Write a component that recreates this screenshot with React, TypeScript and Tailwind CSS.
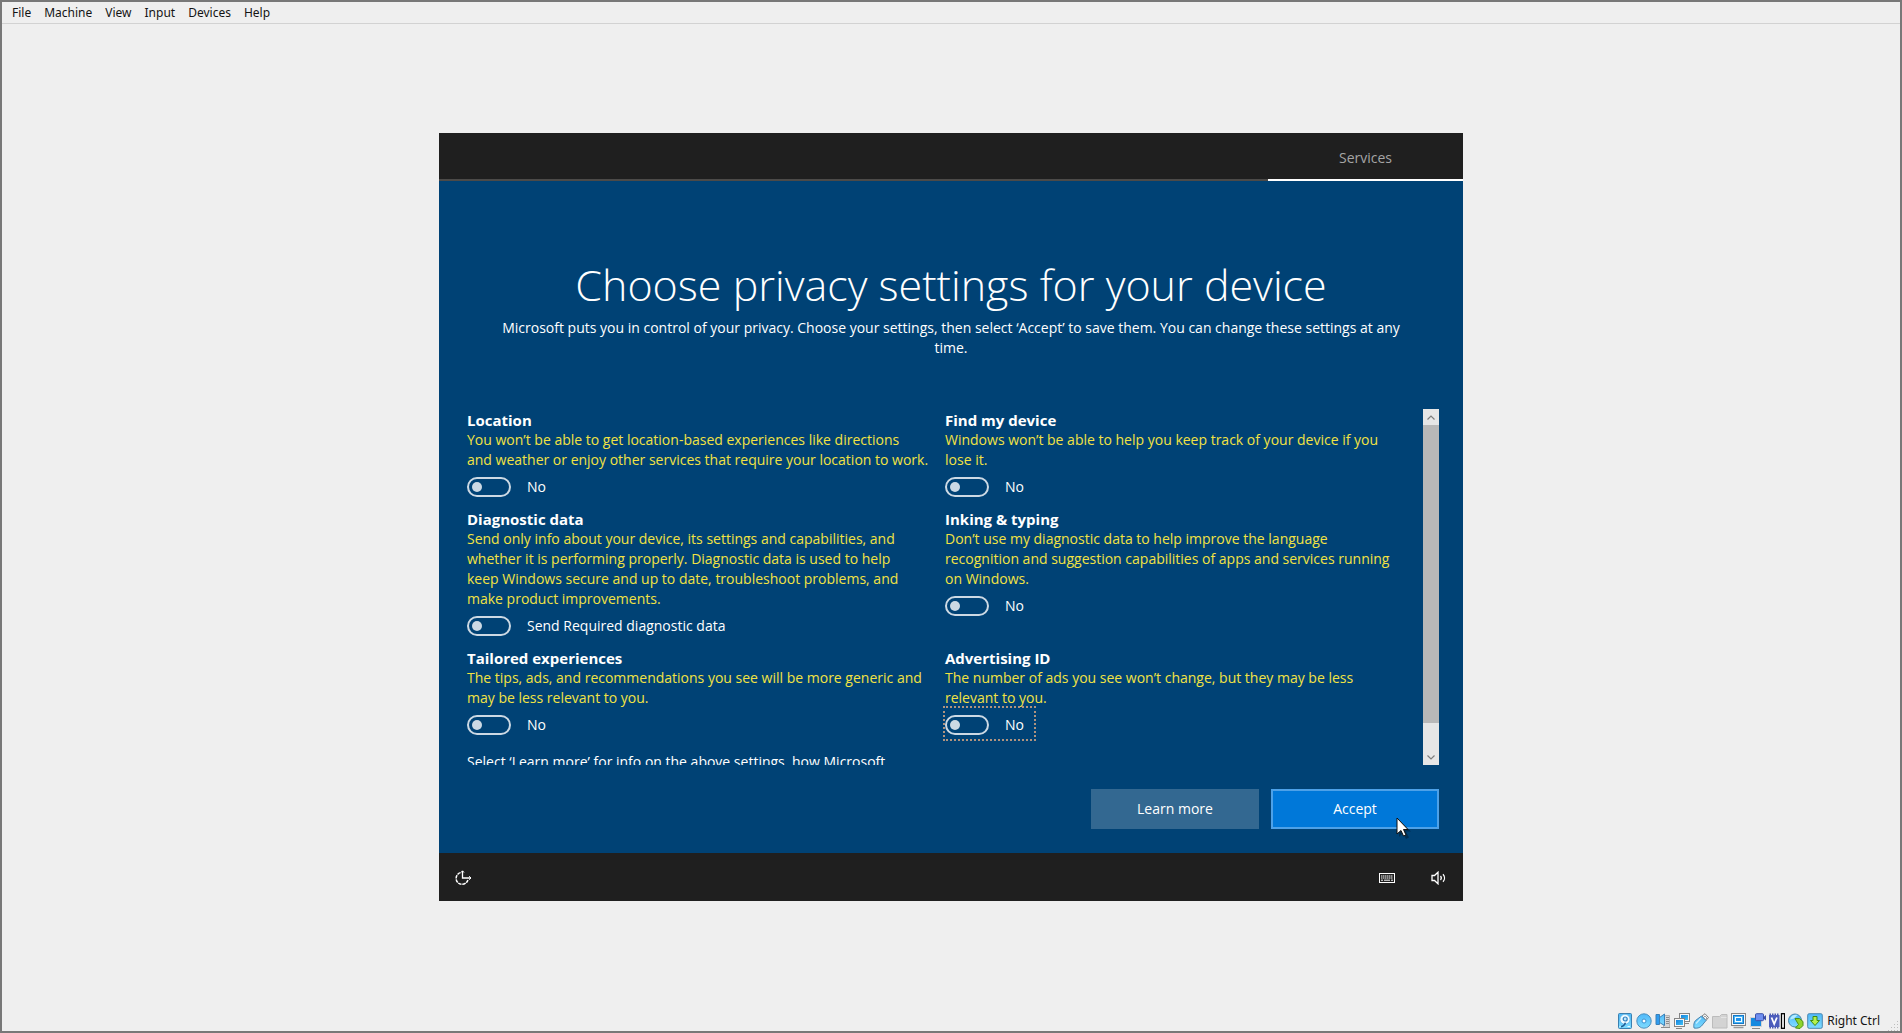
import type { ReactNode } from "react";

const MENUS = ["File", "Machine", "View", "Input", "Devices", "Help"];

type Setting = { id: string; title: string; text: string; state: string; focused?: boolean };

const SETTINGS: Setting[] = [
  {
    id: "location",
    title: "Location",
    text: "You won’t be able to get location-based experiences like directions\nand weather or enjoy other services that require your location to work.",
    state: "No",
  },
  {
    id: "find",
    title: "Find my device",
    text: "Windows won’t be able to help you keep track of your device if you\nlose it.",
    state: "No",
  },
  {
    id: "diagnostic",
    title: "Diagnostic data",
    text: "Send only info about your device, its settings and capabilities, and\nwhether it is performing properly. Diagnostic data is used to help\nkeep Windows secure and up to date, troubleshoot problems, and\nmake product improvements.",
    state: "Send Required diagnostic data",
  },
  {
    id: "inking",
    title: "Inking & typing",
    text: "Don’t use my diagnostic data to help improve the language\nrecognition and suggestion capabilities of apps and services running\non Windows.",
    state: "No",
  },
  {
    id: "tailored",
    title: "Tailored experiences",
    text: "The tips, ads, and recommendations you see will be more generic and\nmay be less relevant to you.",
    state: "No",
  },
  {
    id: "advertising",
    title: "Advertising ID",
    text: "The number of ads you see won’t change, but they may be less\nrelevant to you.",
    state: "No",
    focused: true,
  },
];

function SettingItem({ setting }: { setting: Setting }) {
  return (
    <section className="pb-2">
      <h2 className="text-[15px] leading-5 font-bold">{setting.title}</h2>
      <p id={`${setting.id}-text`} className="whitespace-pre-line text-[#f2e243]">
        {setting.text}
      </p>
      <label
        className={
          setting.focused
            ? "flex w-fit items-center gap-4 pt-[7px] pr-2.5 pb-1 outline-2 outline-dotted outline-[#b0937f]"
            : "flex w-fit items-center gap-4 pt-[7px] pr-2.5 pb-1"
        }
      >
        <input
          type="checkbox"
          role="switch"
          aria-describedby={`${setting.id}-text`}
          className="h-5 w-11 shrink-0 appearance-none rounded-full border-2 border-[#ccd9e4] before:m-[3px] before:block before:size-2.5 before:rounded-full before:bg-[#ccd9e4] checked:before:ml-[27px]"
        />
        <span>{setting.state}</span>
      </label>
    </section>
  );
}

function Chevron({ up }: { up?: boolean }) {
  return (
    <svg width="8" height="5" viewBox="0 0 8 5" fill="none" stroke="#7d7d7d" strokeWidth="1.2">
      <path d={up ? "M.5 4.5 4 1l3.5 3.5" : "M.5 .5 4 4 7.5 .5"} />
    </svg>
  );
}

function ScrollBar() {
  return (
    <div className="flex w-4 shrink-0 flex-col bg-[#e6e6e6]">
      <button aria-label="Scroll up" className="flex h-4 items-center justify-center">
        <Chevron up />
      </button>
      <div className="flex-1">
        <div className="h-[92%] bg-[#b8b8b8]" />
      </div>
      <button aria-label="Scroll down" className="flex h-4 items-center justify-center">
        <Chevron />
      </button>
    </div>
  );
}

function Icon16({ label, children }: { label: string; children: ReactNode }) {
  return (
    <button aria-label={label}>
      <svg width="16" height="16" viewBox="0 0 16 16" fill="none">
        {children}
      </svg>
    </button>
  );
}

function StatusIcons() {
  return (
    <div className="flex items-center gap-[3px]">
      <svg width="0" height="0" className="absolute">
        <defs>
          <linearGradient id="sky" x1="0" y1="0" x2="0" y2="1">
            <stop offset="0" stopColor="#4fb8f8" />
            <stop offset="1" stopColor="#7fdcff" />
          </linearGradient>
          <linearGradient id="deep" x1="0" y1="0" x2="1" y2="1">
            <stop offset="0" stopColor="#1583dc" />
            <stop offset="1" stopColor="#3fc0f8" />
          </linearGradient>
        </defs>
      </svg>
      <Icon16 label="Hard disks">
        <rect x="1.5" y=".5" width="13" height="15" rx="1" fill="url(#sky)" stroke="#3a80b0" />
        <circle cx="8" cy="6.3" r="5" fill="#eefaff" stroke="#4aa8e0" strokeWidth=".6" />
        <circle cx="8.2" cy="6" r="2" fill="#bfe6fa" stroke="#2f80c0" strokeWidth="1.2" />
        <path d="M4 13.8c1.5-.3 3.500-1.500 4.500-4" stroke="#1f5f96" strokeWidth="1.5" />
        <path d="M2.500 13.500h1M10.500 13.500h2.500" stroke="#eafaff" />
      </Icon16>
      <Icon16 label="Optical drives">
        <circle cx="8" cy="8" r="7.2" fill="url(#sky)" stroke="#4a90c0" />
        <circle cx="8" cy="8" r="2" fill="#fff" stroke="#3a90d0" />
      </Icon16>
      <Icon16 label="Audio">
        <path d="M8.500 2.500h6v12h-6z" fill="#d6d6d6" stroke="#b4b4b4" />
        <path d="M11 4.500h3M11 6.500h3M11 8.500h3M11 10.500h3M6 14.500h9" stroke="#8c8c8c" />
        <path d="M1 1.500h3.500v10H1z" fill="#2f9cf0" stroke="#3a80b8" />
        <path d="M4.500 4.500 9.500 1v11.500l-5-3z" fill="url(#sky)" stroke="#3a80b8" />
      </Icon16>
      <Icon16 label="Network">
        <rect x="5.500" y=".5" width="10" height="8" fill="#f8f8f8" stroke="#858585" />
        <rect x="7" y="2" width="7" height="5" fill="url(#deep)" />
        <path d="M11 10.500h4M2 15.500h6" stroke="#858585" />
        <rect x=".5" y="5.500" width="10" height="8" fill="#f8f8f8" stroke="#858585" />
        <rect x="2" y="7" width="7" height="5" fill="url(#deep)" />
      </Icon16>
      <Icon16 label="USB">
        <path d="M9 3 12 .7 15.5 4.5 13 7.5z" fill="#f2f2f2" stroke="#808080" />
        <path d="M11.500 3.500h1M13 5h1" stroke="#505050" />
        <path d="M2.500 7.500 8.500 3l4.500 4.500-4.500 5.500c-2 2-4.500 2.500-7.500 2C.5 12 .8 9.500 2.500 7.500z" fill="url(#sky)" stroke="#4a86b0" />
        <path d="M3 10.500 8 5" stroke="#c4eeff" strokeWidth="1.5" />
      </Icon16>
      <Icon16 label="Shared folders">
        <path d="M.5 3.500h7l2-2h5.500v13.500H.5z" fill="#d3d3d3" stroke="#bcbcbc" />
        <path d="M9 4.500h5.500" stroke="#e4e4e4" />
      </Icon16>
      <Icon16 label="Display">
        <rect x=".5" y=".5" width="14" height="12" fill="#f6f6f6" stroke="#858585" />
        <rect x="2.500" y="2.500" width="10" height="8" fill="#48b4f4" stroke="#1478c8" />
        <rect x="4.500" y="4.500" width="6" height="4" fill="#1f92ec" stroke="#f4fcff" />
        <path d="M2.500 14.500h10" stroke="#9a9a9a" strokeWidth="1.5" />
      </Icon16>
      <Icon16 label="Recording">
        <path d="M.5 4.500h11v9H.5z" fill="#168ae0" stroke="#d4d4d4" />
        <path d="M2 15.500h8" stroke="#8b8b8b" />
        <rect x="5.500" y=".7" width="8" height="7" rx="1" fill="#6f8ff0" stroke="#3c50a8" />
        <path d="m13.500 4 2.500-2v5.500l-2.500-2z" fill="#3c50a8" />
      </Icon16>
      <Icon16 label="Processor">
        <path d="M.5 1.500h10M.5 14.500h10" stroke="#4c5ab0" strokeWidth="2" strokeDasharray="1.5 1" />
        <rect x="0" y="2" width="10.500" height="12" fill="#4c5cbc" />
        <path d="m2.500 4.500 2.700 6.500L7.900 4.500" stroke="#fff" strokeWidth="1.8" />
        <rect x="12.500" y=".7" width="3" height="14.600" fill="#fff" stroke="#000" strokeWidth="1.3" />
      </Icon16>
      <Icon16 label="Mouse integration">
        <circle cx="7" cy="7.500" r="6.500" fill="url(#sky)" stroke="#4a86a8" />
        <path d="M2 6.500C3 2.500 6.500 1 9.500 2L6 5.500z" fill="#b4ecff" />
        <path d="M7 5.500h4.500l3.500 3v4l-3 3-4.500-.5 3-3.500z" fill="#8fd42c" stroke="#4a8f14" />
      </Icon16>
      <Icon16 label="Keyboard">
        <rect x=".7" y=".7" width="14.600" height="14.600" rx="1.500" fill="url(#sky)" stroke="#4a86b0" />
        <path d="M6 3.500h4v4h2.500L8 12.500 3.500 7.500H6z" fill="#b4f04c" stroke="#3f8a12" />
      </Icon16>
    </div>
  );
}

export default function App() {
  return (
    <div className="flex min-h-screen flex-col border-2 border-[#787878] bg-[#efefef] font-['Noto_Sans',sans-serif] text-xs text-[#141414]">
      <nav className="flex h-[22px] items-center gap-[13px] border-b border-[#d2d2d2] pl-[10px]">
        {MENUS.map((m) => (
          <button key={m}>{m}</button>
        ))}
      </nav>

      <main className="flex flex-1 flex-col items-center justify-center">
        <div className="flex w-full max-w-5xl flex-col bg-[#004275] font-['Open_Sans',sans-serif] text-sm leading-5 text-white">
          <header className="flex h-12 bg-[#1f1f1f]">
            <div className="flex-1 border-b-2 border-[#4c4a48]" />
            <div className="flex w-[195px] items-center justify-center border-b-2 border-white pt-1 text-[#a5a5a5]">
              Services
            </div>
          </header>

          <div className="flex flex-col px-6 pt-[76px] pb-6">
            <h1 className="text-center text-[43px] leading-[56px] font-light">Choose privacy settings for your device</h1>
            <p className="mt-[5px] px-6 text-center">
              Microsoft puts you in control of your privacy. Choose your settings, then select ‘Accept’ to save them. You
              can change these settings at any time.
            </p>

            <div className="mt-[51px] flex h-[356px]">
              <div className="flex-1 overflow-hidden pt-px pl-1">
                <div className="grid grid-cols-2">
                  {SETTINGS.map((s) => (
                    <SettingItem key={s.id} setting={s} />
                  ))}
                </div>
                <p className="mt-[5px]">Select ‘Learn more’ for info on the above settings, how Microsoft</p>
              </div>
              <ScrollBar />
            </div>

            <div className="mt-6 flex justify-end gap-3">
              <button className="h-10 w-42 bg-[#336891]">Learn more</button>
              <button className="relative h-10 w-42 border-2 border-[#4da1e8] bg-[#0078d9]">
                Accept
                <svg className="absolute top-[26px] left-[123px]" width="16" height="24" viewBox="0 0 16 24">
                  <path d="M3 3v17l4-4 3 6 3-1.500-3-6h5z" fill="#000" opacity=".3" />
                  <path d="M1 1v16l4-3.500 2.500 5.500 2.500-1-2.500-5.500H12z" fill="#fff" stroke="#101010" />
                </svg>
              </button>
            </div>
          </div>

          <footer className="flex h-12 items-center bg-[#1f1f1f] pt-0.5 pr-4 pl-4">
            <button aria-label="Ease of access">
              <svg width="17" height="16" viewBox="0 0 17 16" fill="none" stroke="#fff">
                <path d="M5.500 2.600A6 6 0 1 0 12.900 10" strokeWidth="1.5" strokeDasharray="3.500 .8" />
                <path d="M7.500 1v7H16" strokeWidth="1.3" />
                <path d="m6 2.500 1.500-1.700L9 2.500M14.200 6.200 16 8l-1.800 1.800" />
              </svg>
            </button>
            <div className="ml-auto flex items-center gap-9">
              <button aria-label="On-screen keyboard">
                <svg width="16" height="10" viewBox="0 0 16 10" fill="none" stroke="#fff">
                  <rect x=".5" y=".5" width="15" height="9" />
                  <path d="M2 3h12M2 5h12" strokeDasharray="1.5 .5" />
                  <path d="M2 7.200h2M5 7.200h6M12 7.200h2" />
                </svg>
              </button>
              <button aria-label="Volume">
                <svg width="16" height="14" viewBox="0 0 16 14" fill="none" stroke="#fff" strokeWidth="1.3">
                  <path d="M1 4.500h2.500L7 1.200v11.600L3.500 9.500H1z" />
                  <path d="M9.500 5c1 1.200 1 2.800 0 4M12 3.200c2 2.200 2 5.400 0 7.600" />
                </svg>
              </button>
            </div>
          </footer>
        </div>
      </main>

      <div className="flex h-[21px] items-center justify-end gap-1">
        <StatusIcons />
        <span>Right Ctrl</span>
        <svg className="ml-1 self-end" width="12" height="12" viewBox="0 0 12 12" fill="none" stroke="#bdbdbd">
          <path d="M9.500 2v1M6.500 5v1M9.500 5v1M3.500 8v1M6.500 8v1M9.500 8v1M.5 11v1M3.500 11v1M6.500 11v1M9.500 11v1" />
        </svg>
      </div>
    </div>
  );
}
